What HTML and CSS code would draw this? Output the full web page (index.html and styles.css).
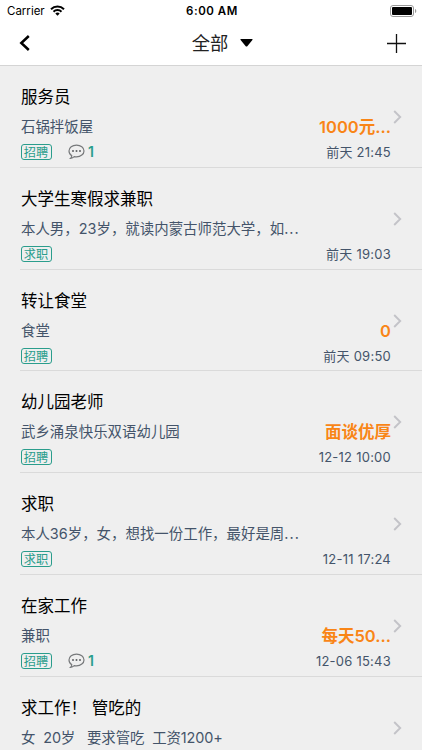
FILE: index.html
```
<!DOCTYPE html>
<html lang="zh-CN">
<head>
<meta charset="utf-8">
<title>全部</title>
<link rel="stylesheet" href="styles.css">
</head>
<body>
<svg width="0" height="0" class="defs">
  <symbol id="chevron" viewBox="0 0 9 14"><path d="M1.2 1l6 6-6 6" fill="none" stroke="#c3c3c8" stroke-width="1.9"/></symbol>
  <symbol id="bubble" viewBox="0 0 17 16"><path d="M8.5 1.1C4.3 1.1 1 3.6 1 6.9c0 2.2 1.2 3.8 2.8 4.8-.1 1-.6 1.9-1.3 2.6 1.7-.1 2.9-.8 3.8-1.7.7.1 1.4.2 2.2.2 4.2 0 7.5-2.6 7.5-5.9S12.7 1.1 8.5 1.1z" fill="none" stroke="#77797b" stroke-width="1.2"/><g fill="#606264"><circle cx="5" cy="7" r="1"/><circle cx="8.5" cy="7" r="1"/><circle cx="12" cy="7" r="1"/></g></symbol>
</svg>
<div class="status">
  <div class="carrier"><span>Carrier</span>
    <svg width="15" height="11" viewBox="0 0 15 11"><g fill="none" stroke="#000" stroke-width="2"><path d="M1 4.2a9.2 9.2 0 0 1 13 0"/><path d="M3.5 6.8a5.6 5.6 0 0 1 8 0"/></g><path d="M7.5 10.7L5.3 8.5a3.1 3.1 0 0 1 4.4 0z"/></svg>
  </div>
  <div class="clock">6:00 AM</div>
  <svg class="battery" width="27" height="12" viewBox="0 0 27 12"><rect x=".5" y=".5" width="23" height="11" rx="2.5" fill="none" stroke="#999"/><rect x="2" y="2" width="20" height="8" rx="1"/><path d="M25 4v4c1.7-.5 1.7-3.5 0-4z" fill="#999"/></svg>
</div>
<div class="nav">
  <svg width="12" height="16" viewBox="0 0 12 16"><path d="M9.8 1L2.3 8l7.5 7" fill="none" stroke="#000" stroke-width="2.5"/></svg>
  <div class="heading"><span>全部</span><svg width="13" height="8" viewBox="0 0 13 8"><path d="M1 0h11q1 .2.4 1L7.3 7.2q-.8.8-1.6 0L.6 1Q0 .2 1 0z"/></svg></div>
  <svg width="19" height="19" viewBox="0 0 19 19"><path d="M9.5 0v19M0 9.500h19" stroke="#111" stroke-width="1.3"/></svg>
</div>
<main>
  <article class="row"><h2>服务员</h2><div class="info"><p>石锅拌饭屋</p><b>1000元...</b></div><div class="meta"><span class="tag">招聘</span><svg class="bubble"><use href="#bubble"/></svg><span class="count">1</span><time>前天 21:45</time></div><svg class="chevron"><use href="#chevron"/></svg></article>
  <article class="row"><h2>大学生寒假求兼职</h2><div class="info"><p>本人男，23岁，就读内蒙古师范大学，如<i>...</i></p></div><div class="meta"><span class="tag">求职</span><time>前天 19:03</time></div><svg class="chevron"><use href="#chevron"/></svg></article>
  <article class="row"><h2>转让食堂</h2><div class="info"><p>食堂</p><b>0</b></div><div class="meta"><span class="tag">招聘</span><time>前天 09:50</time></div><svg class="chevron"><use href="#chevron"/></svg></article>
  <article class="row"><h2>幼儿园老师</h2><div class="info"><p>武乡涌泉快乐双语幼儿园</p><b>面谈优厚</b></div><div class="meta"><span class="tag">招聘</span><time>12-12 10:00</time></div><svg class="chevron"><use href="#chevron"/></svg></article>
  <article class="row"><h2>求职</h2><div class="info"><p>本人36岁，女，想找一份工作，最好是周<i>...</i></p></div><div class="meta"><span class="tag">求职</span><time>12-11 17:24</time></div><svg class="chevron"><use href="#chevron"/></svg></article>
  <article class="row"><h2>在家工作</h2><div class="info"><p>兼职</p><b>每天50...</b></div><div class="meta"><span class="tag">招聘</span><svg class="bubble"><use href="#bubble"/></svg><span class="count">1</span><time>12-06 15:43</time></div><svg class="chevron"><use href="#chevron"/></svg></article>
  <article class="row"><h2>求工作！ 管吃的</h2><div class="info"><p class="tight">女&nbsp; 20岁&nbsp;&nbsp; 要求管吃&nbsp; 工资1200+</p></div><svg class="chevron"><use href="#chevron"/></svg></article>
</main>
</body>
</html>
```
FILE: styles.css
```
* { box-sizing: border-box; }
body { margin: 0; height: 750px; overflow: hidden; background: #efefef; font-family: Inter, "Noto Sans CJK SC", sans-serif; color: #000; }
svg { display: block; flex: none; }
.defs { position: absolute; }
.status { height: 22px; display: grid; grid-template-columns: 1fr auto 1fr; align-items: center; padding: 0 5px 0 7px; background: #fff; font-size: 11.5px; line-height: 22px; }
.carrier { display: flex; align-items: center; gap: 5px; }
.carrier svg { margin-top: -1px; }
.clock { font-weight: 600; letter-spacing: .55px; }
.battery { justify-self: end; margin-top: -1px; }
.nav { height: 44px; display: grid; grid-template-columns: 1fr auto 1fr; align-items: center; padding: 0 16px 1px 19px; background: #fff; border-bottom: 1px solid #d4d4d4; }
.nav > :last-child { justify-self: end; }
.heading { display: flex; align-items: center; gap: 12px; margin-left: 20px; font-size: 18.3px; color: #222; line-height: 26px; }
.row { position: relative; height: 101.8px; margin-left: 20px; padding: 18px 31px 0 1px; border-bottom: 1px solid #dadada; white-space: nowrap; }
h2 { margin: 0; font-size: 16.5px; line-height: 26px; font-weight: 400; }
.info { display: flex; justify-content: space-between; align-items: center; height: 26px; margin-top: 4px; line-height: 26px; }
p { margin: 0; font-size: 14.45px; color: #44546a; }
.tight { letter-spacing: -.12px; }
i { font-style: normal; letter-spacing: 1px; }
b { font-size: 16.5px; font-weight: 600; color: #f98516; }
.meta { display: flex; align-items: center; height: 18px; margin-top: 3px; color: #44546a; font-size: 13px; line-height: 18px; letter-spacing: .24px; }
.tag { width: 31px; height: 16px; margin-left: -.5px; border: 1px solid #2a9d8c; border-radius: 3px; color: #2a9d8c; font-size: 12.2px; line-height: 15px; text-align: center; letter-spacing: 0; }
.bubble { width: 17px; height: 16px; margin-left: 16.5px; }
.count { margin-left: 3px; color: #2a9d8c; font-weight: 600; font-size: 14px; }
time { margin-left: auto; }
.chevron { position: absolute; right: 20px; top: 44px; width: 9px; height: 14px; }
```
